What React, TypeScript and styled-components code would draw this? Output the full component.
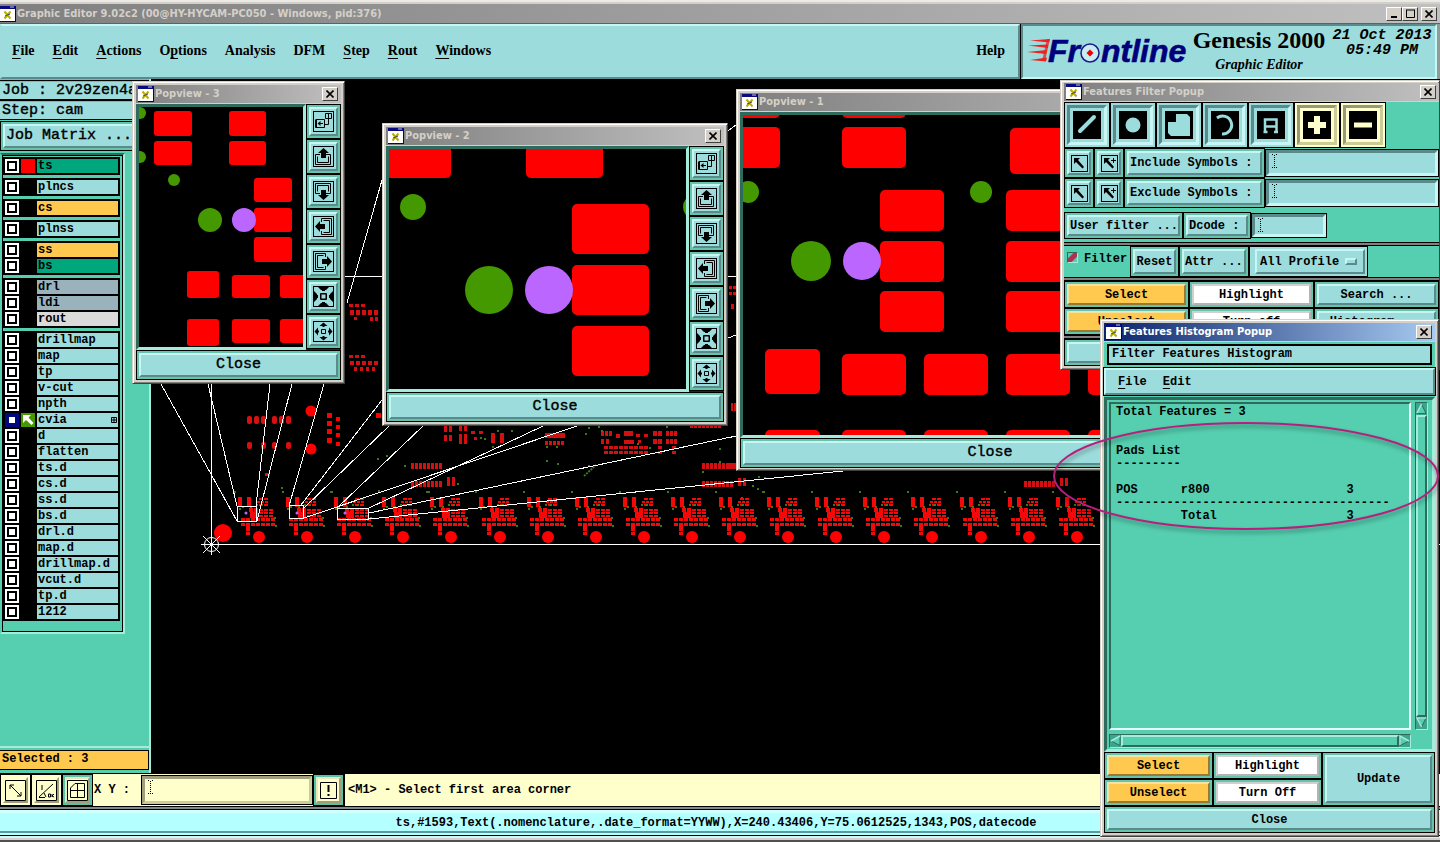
import React from 'react';
import styled, { createGlobalStyle, css } from 'styled-components';

const MONO = '"Liberation Mono", monospace';
const SERIF = '"Liberation Serif", serif';
const UI = '"DejaVu Sans Condensed", "DejaVu Sans", sans-serif';

const c = {
  green: '#55cfaf',
  aqua: '#9ddcdc',
  aquaHi: '#c8f6f4',
  aquaLo: '#5b8a8c',
  teal: '#2f6b5c',
  mint: '#a6ecdc',
  frame: '#d4d0c8',
  cream: '#ffffcc',
  orange: '#ffc84e',
  pad: '#ff0000',
  dot: '#449900',
  violet: '#bb66ff',
};

const tones = {
  aqua: { bg: c.aqua, hi: c.aquaHi, lo: c.aquaLo, ring: '#66c4ac' },
  tool: { bg: c.aqua, hi: c.aquaHi, lo: c.aquaLo, ring: c.aqua },
  cream: { bg: c.cream, hi: c.cream, lo: '#a09e7c', ring: c.cream },
  creamTool: { bg: c.cream, hi: '#cccc99', lo: '#99997a', ring: c.cream },
  creamGreen: { bg: c.cream, hi: '#e8e8bc', lo: '#a09e7c', ring: '#5cc0a4' },
  orange: { bg: c.orange, hi: '#f4e2a0', lo: '#9a7a30', ring: '#66c4ac' },
  white: { bg: '#ffffff', hi: '#d0d0d0', lo: '#b4b4b4', ring: '#66c4ac' },
};
type Tone = keyof typeof tones;

const GlobalStyle = createGlobalStyle`
  * { box-sizing: border-box; }
  body { margin: 0; background: #000; color: #000; overflow: hidden; }
  button, input, textarea, select { font: inherit; color: inherit; margin: 0; border-radius: 0; }
  u { text-decoration: underline; text-underline-offset: 3px; text-decoration-thickness: 1px; }
`;

const Page = styled.div`
  position: relative;
  display: flex;
  flex-direction: column;
  min-height: 100vh;
  overflow: hidden;
  font: bold 12px/14px ${MONO};
`;

/* ---------- shared controls ---------- */

const Key = styled.button<{ $tone?: Tone; $inset?: boolean; $w?: number; $grow?: boolean; $left?: boolean; $big?: boolean }>`
  ${({ $tone = 'aqua', $inset }) => {
    const t = tones[$tone];
    const a = $inset ? t.lo : t.hi;
    const b = $inset ? t.hi : t.lo;
    return css`
      background: ${t.bg};
      border: 2px solid;
      border-color: ${a} ${b} ${b} ${a};
      box-shadow: 0 0 0 2px ${t.ring}, 0 0 0 3px #000;
    `;
  }}
  display: flex;
  align-items: center;
  justify-content: ${p => (p.$left ? 'flex-start' : 'center')};
  margin: 3px;
  padding: 0 ${p => (p.$left ? '1px' : '0')};
  width: ${p => (p.$w ? `${p.$w}px` : 'auto')};
  flex: ${p => (p.$grow ? '1' : 'none')};
  white-space: pre;
  ${p => p.$big && css`font-size: 15px;`}
`;

const FieldBox = styled.label<{ $cream?: boolean; $w?: number }>`
  position: relative;
  display: flex;
  margin: 2px 1px;
  outline: 1px solid #000;
  border: 3px solid;
  border-color: ${p => (p.$cream ? '#a09e7c #cccc99 #cccc99 #a09e7c' : `${c.aquaLo} ${c.aquaHi} ${c.aquaHi} ${c.aquaLo}`)};
  background: ${p => (p.$cream ? c.cream : c.aqua)};
  width: ${p => (p.$w ? `${p.$w}px` : 'auto')};
  flex: ${p => (p.$w ? 'none' : '1')};
  min-width: 0;
`;

const FieldInput = styled.input`
  width: 100%;
  min-width: 0;
  border: 0;
  padding: 0 8px;
  background: transparent;
  outline: 0;
`;

const FieldCaret = styled.svg`
  position: absolute;
  left: 3px;
  top: 0;
`;

function Field({ label, cream, w, id }: { label: string; cream?: boolean; w?: number; id?: string }) {
  return (
    <FieldBox $cream={cream} $w={w}>
      <FieldInput id={id} aria-label={label} />
      <FieldCaret width="5" height="15" viewBox="0 0 5 15">
        <path d="M0 1h1v1h-1zM4 1h1v1h-1zM2 2h1v1h-1zM2 4h1v1h-1zM2 6h1v1h-1zM2 8h1v1h-1zM2 10h1v1h-1zM2 12h1v1h-1zM0 14h1v1h-1zM4 14h1v1h-1zM2 14h1v1h-1z" fill="#000" />
      </FieldCaret>
    </FieldBox>
  );
}

/* ---------- window chrome ---------- */

const TitleBar = styled.div<{ $active?: boolean; $main?: boolean }>`
  display: flex;
  align-items: center;
  gap: 1px;
  height: ${p => (p.$main ? '20px' : '19px')};
  padding: 0 3px 0 ${p => (p.$main ? '0' : '2px')};
  background: ${p => (p.$active ? 'linear-gradient(90deg, #0a246a, #a6caf0)' : 'linear-gradient(90deg, #808080, #c0c0c0)')};
  color: ${p => (p.$active ? '#fff' : '#d4d0c8')};
  border-bottom: 1px solid ${p => (p.$main ? '#4c6a6a' : c.frame)};
  font: bold 11px/18px ${UI};
`;

const TitleText = styled.span`
  flex: 1;
  white-space: nowrap;
  overflow: hidden;
`;

const TitleBtn = styled.button`
  width: 16px;
  height: 14px;
  padding: 0;
  display: flex;
  align-items: center;
  justify-content: center;
  background: ${c.frame};
  border: 1px solid;
  border-color: #fff #404040 #404040 #fff;
`;

const AppIcon = () => (
  <svg width="16" height="16" viewBox="0 0 16 16">
    <rect width="16" height="16" fill="#111" />
    <rect width="15" height="15" fill="#fff" />
    <rect width="15" height="3" fill="#0a0a80" />
    <path d="M10 1h4" stroke="#ccc" />
    <path d="M4.500 5.500l6 7M10.500 5.500l-6 7" stroke="#b8b000" strokeWidth="2" />
    <path d="M5 10l5-2" stroke="#446" strokeWidth="1" />
  </svg>
);

const CloseGlyph = () => (
  <svg width="8" height="8" viewBox="0 0 8 8">
    <path d="M0.500 0.500l7 7M7.500 0.500l-7 7" stroke="#000" strokeWidth="1.600" />
  </svg>
);

function Title({ text, active }: { text: string; active?: boolean }) {
  return (
    <TitleBar $active={active}>
      <AppIcon />
      <TitleText>{text}</TitleText>
      <TitleBtn aria-label={`Close ${text}`}><CloseGlyph /></TitleBtn>
    </TitleBar>
  );
}

const Win = styled.section<{ $w: number }>`
  position: absolute;
  width: ${p => p.$w}px;
  display: flex;
  flex-direction: column;
  border: 1px solid;
  border-color: ${c.frame} #404040 #404040 ${c.frame};
  box-shadow: inset 1px 1px 0 #fff, inset -1px -1px 0 #808080;
  padding: 3px;
  background: ${c.frame};
`;

const Pop3 = styled(Win)` left: 132px; top: 81px; `;
const Pop2 = styled(Win)` left: 382px; top: 123px; `;
const Pop1 = styled(Win)` left: 736px; top: 89px; padding-bottom: 2px; `;
const FilterWin = styled(Win)` right: 0; top: 80px; padding: 2px 0 3px 3px; `;
const HistWin = styled(Win)` right: 1px; top: 319px; `;

/* ---------- main title and header ---------- */

const MainTitle = styled.header`
  height: 24px;
  padding-top: 4px;
  background: ${c.frame};
  box-shadow: inset 0 2px 0 #eceae6;
`;

const BtnPair = styled.div`
  display: flex;
  margin-right: 2px;
`;

const HeaderRow = styled.div`
  display: flex;
  height: 55px;
  border-right: 3px solid #8f9a9a;
`;

const MenuPanel = styled.nav`
  flex: 1;
  display: flex;
  align-items: center;
  gap: 18px;
  padding: 0 13px 2px 10px;
  background: ${c.aqua};
  border: 2px solid;
  border-color: ${c.aquaHi} ${c.aquaLo} ${c.aquaLo} ${c.aqua};
`;

const MenuItem = styled.button<{ $end?: boolean }>`
  padding: 0;
  border: 0;
  background: none;
  font: bold 14px/18px ${SERIF};
  margin-left: ${p => (p.$end ? 'auto' : '0')};
`;

const Brand = styled.div`
  display: flex;
  width: 416px;
  margin-left: 1px;
  padding-left: 4px;
  background: ${c.aqua};
  border: 2px solid;
  border-color: ${c.aquaLo} ${c.aquaHi} ${c.aquaHi} ${c.aquaLo};
`;

const Product = styled.div`
  width: 140px;
  padding-top: 1px;
  text-align: center;
`;

const ProductName = styled.div`
  font: bold 24px/26px ${SERIF};
  white-space: nowrap;
`;

const ProductSub = styled.div`
  font: italic bold 14px/24px ${SERIF};
`;

const Clock = styled.time`
  flex: 1;
  padding-top: 2px;
  font: italic bold 15px/15px ${MONO};
  text-align: center;
  white-space: nowrap;
`;

const Logo = () => (
  <svg width="162" height="50" viewBox="0 0 162 50" aria-label="Frontline">
    <g fill="#ee2222">
      <path d="M3 14.500l20-1.500-1 3.500zM1 19.500l20-1v3.500zM0 26l20-2-1 4zM3 34l17-2.500-1 4z" />
      <path d="M20 13h3l-5 22h-3z" opacity=".75" />
    </g>
    <g fill="#00007c" stroke="#00007c" strokeWidth="0.6" fontFamily="Liberation Sans, sans-serif" fontWeight="bold" fontStyle="italic" fontSize="32">
      <text x="21" y="36">Fr</text>
      <text x="74" y="36">ntline</text>
    </g>
    <circle cx="63" cy="27" r="9" fill="#c8ecf0" stroke="#1a1a8c" strokeWidth="1.500" />
    <path d="M63 23.500l3.500 3.500-3.500 3.500-3.500-3.500z" fill="#e00" />
  </svg>
);

/* ---------- sidebar ---------- */

const Workspace = styled.main`
  flex: 1;
  display: flex;
  min-height: 0;
`;

const Sidebar = styled.aside`
  width: 151px;
  flex: none;
  display: flex;
  flex-direction: column;
  background: ${c.green};
  border-right: 2px solid ${c.mint};
  padding-top: 1px;
`;

const JobInfo = styled.div`
  height: 20px;
  padding: 1px 2px;
  background: ${c.aqua};
  border: 2px solid #000;
  border-width: 1px 0;
  box-shadow: inset 0 1px 0 ${c.green};
  font: 15px/18px ${MONO};
  -webkit-text-stroke: 0.4px #000;
  white-space: nowrap;
  overflow: hidden;
`;

const MatrixBar = styled.div`
  display: flex;
  margin: 1px 0 2px;
`;

const LayerPanel = styled.div`
  width: 125px;
  height: 481px;
  display: flex;
  flex-direction: column;
  gap: 3px;
  padding: 2px 2px 0 1px;
  border: 2px solid;
  border-color: ${c.teal} ${c.mint} ${c.mint} ${c.green};
  outline-offset: -3px;
  outline: 1px solid #000;
`;

const LayerGroup = styled.ul`
  list-style: none;
  margin: 0;
  padding: 1px;
  width: 117px;
  background: #000;
`;

const LayerRow = styled.li`
  display: flex;
  height: 16px;
  padding: 1px;
  gap: 2px;
`;

const Tick = styled.input<{ $on?: boolean }>`
  appearance: none;
  width: 14px;
  height: 14px;
  border: 2px solid ${p => (p.$on ? '#000a80' : '#fff')};
  background: #fff;
  box-shadow: inset 0 0 0 2px ${p => (p.$on ? '#000a80' : '#000')};
`;

const Swatch = styled.span<{ $color?: string }>`
  width: 14px;
  height: 14px;
  background: ${p => p.$color || '#000'};
`;

const LayerName = styled.label<{ $bg: string }>`
  flex: 1;
  display: flex;
  align-items: center;
  justify-content: space-between;
  padding: 0 1px;
  background: ${p => p.$bg};
  line-height: 14px;
`;

const Spacer = styled.div` flex: 1; `;

const Selected = styled.div`
  height: 20px;
  margin: 2px 0 3px;
  padding: 0 2px;
  border: 1px solid #000;
  border-left: 0;
  background: ${c.orange};
  line-height: 17px;
`;

const SelectedWrap = styled.div`
  border-top: 2px solid ${c.mint};
`;

type Layer = { n: string; bg?: string; sw?: string; on?: boolean };
const TEAL = '#00a67c';
const GREY = '#99b2bc';
const layerGroups: Layer[][] = [
  [{ n: 'ts', bg: TEAL, sw: c.pad }],
  [{ n: 'plncs' }],
  [{ n: 'cs', bg: c.orange }],
  [{ n: 'plnss' }],
  [{ n: 'ss', bg: c.orange }, { n: 'bs', bg: TEAL }],
  [{ n: 'drl', bg: GREY }, { n: 'ldi', bg: GREY }, { n: 'rout', bg: '#dadada' }],
  [
    ...['drillmap', 'map', 'tp', 'v-cut', 'npth'].map(n => ({ n })),
    { n: 'cvia', on: true, sw: c.dot },
    ...['d', 'flatten', 'ts.d', 'cs.d', 'ss.d', 'bs.d', 'drl.d', 'map.d', 'drillmap.d', 'vcut.d', 'tp.d', '1212'].map(n => ({ n })),
  ],
];

function Layers() {
  return (
    <LayerPanel>
      {layerGroups.map((g, i) => (
        <LayerGroup key={i}>
          {g.map(l => (
            <LayerRow key={l.n}>
              <Tick type="checkbox" id={`layer-${l.n}`} $on={l.on} defaultChecked={l.on} />
              <Swatch $color={l.sw}>
                {l.on && (
                  <svg width="14" height="14" viewBox="0 0 14 14" display="block">
                    <path d="M2 2h8L7.500 4.500l5 5.500-2 2-5.500-5L2 10z" fill="#fff" />
                  </svg>
                )}
              </Swatch>
              <LayerName htmlFor={`layer-${l.n}`} $bg={l.bg || c.aqua}>
                {l.n}
                {l.on && (
                  <svg width="6" height="6" viewBox="0 0 6 6">
                    <path d="M0.500 0.500h5v5h-5zM3 0v6M0 3h6" stroke="#000" fill="none" />
                  </svg>
                )}
              </LayerName>
            </LayerRow>
          ))}
        </LayerGroup>
      ))}
    </LayerPanel>
  );
}

/* ---------- board canvas ---------- */

const Canvas = styled.div`
  flex: 1;
  display: grid;
  min-width: 0;
  background: #000;
`;

const BoardSvg = styled.svg`
  width: 100%;
  height: 100%;
  min-height: 0;
`;

const row = (x: number, y: number, n: number, pitch: number, w: number, h: number) =>
  Array.from({ length: n }, (_, i) => `M${x + i * pitch} ${y}h${w}v${h}h${-w}z`).join('');

const unitRed =
  'M-21-40h4v10h-4zM-12-40h4v10h-4z' +
  row(0, -39, 2, 5, 4, 2) + row(-2, -36, 3, 4, 3, 2) + row(0, -33, 2, 5, 4, 2) +
  'M-10-29h4v4h-4zM-9-25h4v6h-4zM-5-29h4v10h-4z' +
  row(0, -28, 3, 5, 4, 2) + row(0, -25, 3, 5, 4, 2) + row(0, -22, 3, 5, 4, 2) +
  row(-18, -19, 7, 5, 4, 3) + row(-18, -14, 7, 5, 4, 3) +
  'M-13-11h4v5h-4zM-13-5h4v3h-4z';
const unitGreen = row(-25, -46, 1, 1, 2, 2) + row(-20, -29, 1, 1, 2, 2) + row(15, -20, 1, 1, 2, 2) + row(16, -12, 1, 1, 2, 2) + row(-3, -33, 2, 5, 2, 2) + row(-17, -31, 2, 8, 2, 2);

const clusters =
  row(411, 463, 8, 4, 3, 6) + row(411, 481, 8, 4, 3, 6) + row(447, 477, 2, 5, 3, 9) +
  row(702, 463, 8, 4, 3, 6) + row(702, 481, 8, 4, 3, 6) + row(738, 478, 2, 5, 3, 8) +
  row(1024, 481, 8, 4, 3, 6) + row(1060, 478, 2, 5, 3, 8) +
  row(444, 425, 2, 5, 3, 7) + row(459, 425, 2, 5, 3, 6) + row(444, 435, 2, 5, 3, 6) + row(459, 434, 2, 5, 3, 10) +
  row(471, 431, 2, 8, 4, 3) + row(474, 437, 1, 8, 3, 3) +
  row(491, 433, 2, 9, 4, 10) +
  row(545, 433, 5, 4, 4, 5) + row(545, 441, 5, 4, 3, 4) +
  row(601, 431, 3, 4, 3, 5) + row(601, 439, 2, 5, 3, 5) + row(616, 434, 2, 1, 3, 4) + row(624, 431, 3, 3, 3, 5) + row(624, 440, 2, 5, 5, 4) +
  row(636, 434, 2, 8, 4, 3) + row(638, 440, 1, 8, 3, 3) +
  row(653, 431, 2, 5, 4, 5) + row(666, 431, 3, 4, 3, 5) + row(653, 439, 2, 5, 4, 5) + row(666, 439, 3, 4, 3, 5) +
  row(604, 446, 9, 5, 4, 3) + row(604, 451, 9, 5, 4, 3) + row(658, 446, 2, 14, 4, 3) + row(658, 451, 2, 14, 4, 3) +
  row(690, 425, 8, 4, 3, 3) +
  row(349, 304, 3, 6, 4, 3) + row(350, 310, 5, 6, 4, 5) + row(354, 317, 1, 8, 3, 3) + row(370, 317, 2, 5, 3, 4) +
  row(349, 355, 3, 6, 4, 3) + row(350, 361, 5, 6, 4, 4) + row(354, 367, 4, 6, 3, 4) +
  row(729, 286, 2, 4, 3, 3) + row(729, 292, 2, 4, 3, 3) + row(731, 304, 1, 4, 3, 5) + row(731, 403, 2, 3, 2, 8) + row(729, 463, 2, 4, 3, 6);

const strays = [[377, 458], [386, 455], [404, 465], [497, 430], [492, 446], [511, 430], [546, 446], [556, 446], [546, 460], [557, 463], [585, 433], [588, 427], [598, 426], [601, 430], [588, 465], [666, 426], [719, 448], [719, 461], [702, 471], [649, 447], [637, 443], [281, 487], [331, 491], [222, 494], [457, 483], [428, 491], [758, 476], [764, 477], [752, 485], [757, 488], [762, 491], [741, 497], [334, 500], [378, 490], [480, 437], [484, 438]];

const Board = () => {
  const units = Array.from({ length: 18 }, (_, i) => 259 + Math.round(i * 48.1));
  return (
    <BoardSvg aria-hidden>
      <defs>
        <g id="unit">
          <path d={unitRed} fill="#f50808" />
          <path d={unitGreen} fill="#3a7a10" />
          <circle r="6" fill={c.pad} />
        </g>
      </defs>
      <g transform="translate(-151 -79)">
        <g fill={c.pad}>
          <circle cx="223" cy="533" r="9" />
          {[249, 256, 263, 274, 281, 288].map(x => <rect key={x} x={x - 2} y="416" width="5" height="8" rx="2" fill="#d81010" />)}
          {[249, 263, 274, 288].map(x => <rect key={x} x={x - 2} y="442" width="5" height="7" rx="2" fill="#d81010" />)}
          <circle cx="311" cy="411" r="5.500" />
          <circle cx="311" cy="449" r="5.500" />
          {[415, 423, 431, 440].map(y => <path key={y} d={`M327 ${y - 2}h5v5h-5zM336 ${y + 2}h4v4h-4z`} />)}
          <path d="M376 413h5v5h-5zM265 473h5v3h-5z" />
        </g>
        <path d={clusters} fill="#d40f0f" />
        <path d="M584 476l12-11" stroke="#3a7a10" strokeWidth="2" strokeDasharray="2 1" />
        {strays.map(([x, y]) => <rect key={`${x}-${y}`} x={x} y={y} width="2" height="2" fill="#3a7a10" />)}
        {units.map(x => <use key={x} href="#unit" x={x} y="537" />)}
        <g fill="#b6f">
          <circle cx="246" cy="513" r="1.500" /><circle cx="297" cy="513" r="1.500" /><circle cx="345" cy="513" r="1.500" />
        </g>
        <g stroke="#fff" fill="none" shapeRendering="crispEdges">
          <path d="M211.500 544V276.500H1440M211 544.500H1440" />
          <path d="M237.500 506.500h19v15h-19zM289.500 505.500h14v13h-14zM337.500 508.500h31v11h-31z" />
          <path d="M161 384L237 521M208 384L237 506M270 384L256 506M292 384L257 521M324 384L289 506" />
          <path d="M347 303L382 180M382 400L301 505M389 426L304 508M423 426L337 508" />
          <path d="M304 518L577 426M369 508L543 426M369 513L736 436M369 519L843 471" />
          <path d="M728 131l8-6M728 338l8-3M728 438l8-2" />
        </g>
        <g stroke="#fff" fill="none">
          <circle cx="211.500" cy="544.500" r="7" />
          <path d="M201 544.500h21M211.500 534v21M203 536l17 17M220 536l-17 17" />
        </g>
      </g>
    </BoardSvg>
  );
};

/* ---------- popviews ---------- */

const PopBody = styled.div` display: flex; background: #0a3328; `;

const ViewFrame = styled.div<{ $h: number }>`
  flex: 1;
  min-width: 0;
  height: ${p => p.$h}px;
  display: flex;
  border: 3px solid;
  border-color: ${c.teal} ${c.mint} ${c.mint} ${c.teal};
  background: #000;
`;

const ViewSvg = styled.svg` display: block; flex: 1; width: 100%; height: 100%; `;

const PadButtons = styled.div` display: flex; flex-direction: column; width: 35px; `;

const NavKey = styled(Key)` width: 29px; height: 29px; padding: 0; `;

const CloseRow = styled.div` display: flex; `;
const CloseKey = styled(Key)` flex: 1; height: 24px; font-weight: normal; -webkit-text-stroke: 0.4px #000; `;

const navIcons: [string, string, string][] = [
  ['Zoom area', 'M3 8.500h8.500v8H2.500v-8M3.500 9v7M12.500 2.500h6v5h-6zM15.500 2v6M11 13.500h4.500V8', 'M4.500 12.500l3-2.500v2h2.500v1H7.500v2z'],
  ['Pan up', 'M7 8.500H2.500v10h15v-10H13M4.500 10.500v6h11v-6', 'M10.500 2l5.500 5h-3v5H8V7H5z'],
  ['Pan down', 'M7 12.500H2.500v-10h15v10H13M4.500 10.500v-6h11v6', 'M10.500 19l5.500-5h-3V9H8v5H5z'],
  ['Pan left', 'M8.500 6V2.500h10v16h-10V15M10.500 4.500h6v12h-6', 'M2 10.500l5-5.500v3h5v5H7v3z'],
  ['Pan right', 'M12.500 6V2.500h-10v16h10V15M10.500 4.500h-6v12h6', 'M19 10.500l-5-5.500v3H9v5h5v3z'],
  ['Zoom in', 'M8 8h5v5H8zM7.500 7.500h6v6h-6z', 'M5 1h11l-3 3h-1v1H9V4H8zM5 20h11l-3-3h-1v-1H9v1H8zM1 5v11l3-3v-1h1V9H4V8zM20 5v11l-3-3v-1h-1V9h1V8z'],
  ['Zoom out', 'M8.500 8.500h4v4h-4z', 'M10.500 1.500l4 3.500h-3v1h-2V5h-3zM10.500 19.500l4-3.500h-3v-1h-2v1h-3zM1.500 10.500L5 6.500v3h1v2H5v3zM19.500 10.500L16 6.500v3h-1v2h1v3z'],
];

const NavColumn = () => (
  <PadButtons>
    {navIcons.map(([name, line, fill]) => (
      <NavKey key={name} aria-label={name}>
        <svg width="21" height="21" viewBox="0 0 21 21">
          <rect x=".5" y=".5" width="20" height="20" fill="none" stroke="#000" />
          <path d={line} fill="none" stroke="#000" />
          <path d={fill} fill="#000" />
        </svg>
      </NavKey>
    ))}
  </PadButtons>
);

type View = { title: string; x: number; y: number; h: number; pads: number[][]; dots: number[][]; sel: number[]; r: number };

const views: Record<string, View> = {
  v3: {
    title: 'Popview - 3', x: 139, y: 107, h: 246, r: 3,
    pads: [[154, 111, 38, 25], [229, 111, 37, 25], [154, 141, 38, 24], [229, 141, 37, 24], [254, 178, 38, 24], [254, 208, 38, 24], [254, 237, 38, 25], [187, 271, 32, 27], [232, 275, 38, 23], [280, 275, 38, 23], [187, 319, 32, 27], [232, 319, 38, 24], [280, 319, 38, 24]],
    dots: [[140, 113, 6], [140, 157, 6], [174, 180, 6], [210, 220, 12]], sel: [244, 220, 12],
  },
  v2: {
    title: 'Popview - 2', x: 389, y: 149, h: 246, r: 5,
    pads: [[374, 142, 77, 36], [526, 142, 77, 36], [572, 204, 77, 50], [572, 265, 77, 50], [572, 326, 77, 50]],
    dots: [[413, 207, 13], [696, 207, 13], [489, 290, 24]], sel: [549, 290, 24],
  },
  v1: {
    title: 'Popview - 1', x: 743, y: 115, h: 326, r: 5,
    pads: [[716, 77, 64, 41], [842, 77, 64, 41], [716, 127, 64, 41], [842, 127, 64, 41], [1010, 128, 64, 46], [880, 190, 64, 41], [880, 241, 64, 41], [880, 291, 64, 41], [1006, 190, 64, 41], [1006, 241, 64, 41], [1006, 291, 64, 41], [765, 349, 55, 45], [842, 354, 64, 41], [924, 354, 64, 41], [1006, 354, 64, 41], [1088, 354, 64, 41], [765, 430, 55, 41], [842, 430, 64, 41], [924, 430, 64, 41], [1006, 430, 64, 41], [1088, 430, 64, 41]],
    dots: [[748, 192, 11], [981, 192, 11], [811, 261, 20]], sel: [862, 261, 19],
  },
};

function PopContent({ v }: { v: View }) {
  return (
    <>
      <Title text={v.title} />
      <PopBody>
        <ViewFrame $h={v.h}>
          <ViewSvg aria-label={`${v.title} board view`}>
            <g transform={`translate(${-v.x} ${-v.y})`}>
              {v.pads.map(([x, y, w, h], i) => <rect key={i} x={x} y={y} width={w} height={h} rx={v.r} fill={c.pad} />)}
              {v.dots.map(([x, y, r], i) => <circle key={i} cx={x} cy={y} r={r} fill={c.dot} />)}
              <circle cx={v.sel[0]} cy={v.sel[1]} r={v.sel[2]} fill={c.violet} />
            </g>
          </ViewSvg>
        </ViewFrame>
        <NavColumn />
      </PopBody>
      <CloseRow><CloseKey $big>Close</CloseKey></CloseRow>
    </>
  );
}

/* ---------- features filter popup ---------- */

const GreenBody = styled.div`
  display: flex;
  flex-direction: column;
  background: ${c.green};
`;

const Line = styled.div<{ $h: number; $top?: number }>`
  display: flex;
  height: ${p => p.$h}px;
  padding-top: ${p => p.$top || 0}px;
`;

const Rule = styled.hr`
  width: 100%;
  height: 4px;
  margin: 0;
  border: solid #000;
  border-width: 1px 0;
  background: #808080;
`;

const ToolKey = styled(Key)` width: 40px; height: 40px; border-width: 3px; padding: 0; `;

const CheckLabel = styled.label`
  display: flex;
  align-items: flex-start;
  gap: 6px;
  width: 66px;
  padding: 6px 0 0 3px;
`;

const RedCheck = styled.input`
  appearance: none;
  width: 11px;
  height: 11px;
  border: 1px solid;
  border-color: ${c.teal} ${c.mint} ${c.mint} ${c.teal};
  background: linear-gradient(135deg, ${c.green} 25%, #b03050 35%, #b03050 65%, ${c.green} 75%);
`;

const OptionCell = styled.div`
  display: flex;
  background: ${c.aqua};
  border: 1px solid #000;
  padding: 2px 2px 2px 5px;
`;

const OptionBox = styled.span`
  position: relative;
  display: flex;
  align-items: center;
  width: 110px;
  border: 2px solid;
  border-color: ${c.aquaHi} ${c.aquaLo} ${c.aquaLo} ${c.aquaHi};
`;

const OptionSelect = styled.select`
  appearance: none;
  width: 100%;
  border: 0;
  padding: 0 3px;
  background: transparent;
`;

const OptionTab = styled.span`
  position: absolute;
  right: 6px;
  width: 12px;
  height: 7px;
  border: 2px solid;
  border-color: ${c.aquaHi} ${c.aquaLo} ${c.aquaLo} ${c.aquaHi};
  pointer-events: none;
`;

const toolIcons: [string, Tone, React.ReactNode][] = [
  ['Lines', 'tool', <path d="M7 20L21 6" strokeWidth="4" strokeLinecap="round" />],
  ['Pads', 'tool', <circle cx="14" cy="14" r="7.500" fill="currentColor" stroke="none" />],
  ['Surfaces', 'tool', <path d="M11 3h11l3 3v19H6l-3-3V11h8z" fill="currentColor" stroke="none" />],
  ['Arcs', 'tool', <path d="M6 7a9 9 0 1 1 5 16" strokeWidth="3" />],
  ['Text', 'tool', <path d="M8 22V8.500h11.500V22M8 15.500h11.500M6.500 21h4M17 21h4" strokeWidth="2.500" />],
  ['Positive', 'creamTool', <path d="M14 5v18M5 14h18" strokeWidth="6" />],
  ['Negative', 'creamTool', <path d="M5 14h18" strokeWidth="5" />],
];

const Arrow = ({ plus }: { plus?: boolean }) => (
  <svg width="17" height="17" viewBox="0 0 17 17">
    <rect x=".5" y=".5" width="16" height="16" fill="none" stroke="#000" />
    <path d="M3 3h6L7 5l6 7-1.500 1.500L5 7 3 9z" fill="#000" />
    {plus && <path d="M12.500 3v5M10 5.500h5" stroke="#000" />}
  </svg>
);

function SymbolRow({ label }: { label: string }) {
  return (
    <Line $h={30}>
      <Key $w={24} aria-label={`Pick ${label}`}><Arrow /></Key>
      <Key $w={24} aria-label={`Add ${label}`}><Arrow plus /></Key>
      <Key $w={135} $left>{label}</Key>
      <Field label={label} />
    </Line>
  );
}

const FilterPopup = () => (
  <FilterWin $w={380}>
    <Title text="Features Filter Popup" />
    <GreenBody>
      <Line $h={46}>
        {toolIcons.map(([name, tone, g]) => (
          <ToolKey key={name} $tone={tone} $inset aria-label={name}>
            <svg width="28" height="28" viewBox="0 0 28 28" color={tones[tone].bg}>
              <rect width="28" height="28" fill="#000" />
              <g fill="none" stroke="currentColor">{g}</g>
            </svg>
          </ToolKey>
        ))}
      </Line>
      <SymbolRow label="Include Symbols :" />
      <SymbolRow label="Exclude Symbols :" />
      <Line $h={34} $top={4}>
        <Line $h={27}>
          <Key $w={113} $left>User filter ...</Key>
          <Key $w={62} $left>Dcode :</Key>
          <Field label="Dcode" w={74} />
        </Line>
      </Line>
      <Rule />
      <Line $h={31}>
        <CheckLabel><RedCheck type="checkbox" defaultChecked />Filter</CheckLabel>
        <Key $w={43}>Reset</Key>
        <Key $w={64} $left>Attr ...</Key>
        <OptionCell>
          <OptionBox>
            <OptionSelect aria-label="Profile"><option>All Profile</option></OptionSelect>
            <OptionTab />
          </OptionBox>
        </OptionCell>
      </Line>
      <Rule />
      <Line $h={27}>
        <Key $w={119} $tone="orange">Select</Key>
        <Key $w={119} $tone="white">Highlight</Key>
        <Key $grow>Search ...</Key>
      </Line>
      <Line $h={27}>
        <Key $w={119} $tone="orange">Unselect</Key>
        <Key $w={119} $tone="white">Turn off</Key>
        <Key $grow>Histogram ...</Key>
      </Line>
      <Rule />
      <Line $h={27}><Key $grow aria-label="Close filter" /></Line>
    </GreenBody>
  </FilterWin>
);

/* ---------- histogram popup ---------- */

const HistHeading = styled.div`
  margin: 2px 3px 3px;
  padding: 1px 3px 2px;
  border: 2px solid #000;
  background: ${c.aqua};
`;

const HistMenu = styled.nav`
  display: flex;
  gap: 16px;
  height: 27px;
  padding: 0 12px;
  margin-bottom: 2px;
  align-items: center;
  outline: 1px solid #000;
  border: 2px solid;
  border-color: ${c.aquaHi} ${c.aquaLo} ${c.aquaLo} ${c.aquaHi};
  background: ${c.aqua};
`;

const HistMenuItem = styled.button` padding: 0; border: 0; background: none; `;

const ListFrame = styled.div`
  display: grid;
  grid-template-columns: 1fr 13px;
  grid-template-rows: 328px 14px;
  gap: 4px;
  height: 355px;
  padding: 2px 4px 1px 2px;
  border: 3px solid;
  border-color: ${c.teal} ${c.mint} ${c.mint} ${c.teal};
  background: ${c.green};
`;

const ListText = styled.textarea`
  resize: none;
  border: 2px solid;
  border-color: ${c.teal} #e8fff8 #e8fff8 ${c.teal};
  padding: 2px 5px;
  background: ${c.green};
  line-height: 13px;
  white-space: pre;
  overflow: hidden;
  outline: 0;
`;

const Bar = styled.div<{ $horizontal?: boolean }>`
  display: flex;
  flex-direction: ${p => (p.$horizontal ? 'row' : 'column')};
  background: #3da58b;
  border: 1px solid;
  border-color: ${c.teal} ${c.mint} ${c.mint} ${c.teal};
`;

const Thumb = styled.div`
  flex: 1;
  background: ${c.green};
  border: 2px solid;
  border-color: ${c.mint} ${c.teal} ${c.teal} ${c.mint};
`;

const arrows: Record<string, [string, string]> = {
  up: ['M5.500 1L1 10', 'M1 10.500h9L5.500 1'],
  down: ['M10 1H1l4.500 9', 'M5.500 10L10 1H1z'],
  left: ['M10 1L1 6', 'M1 6l9 4.500V1'],
  right: ['M1 10V1l9 5', 'M10 6L1 10.500V1z'],
};

const BarArrow = ({ dir }: { dir: string }) => (
  <svg width="11" height="12" viewBox="0 0 11 12">
    <path d={arrows[dir][1]} stroke={c.teal} fill={c.green} strokeWidth="1" />
    <path d={arrows[dir][0]} stroke={c.mint} fill="none" strokeWidth="1.500" />
  </svg>
);

const HistButtons = styled.div`
  display: grid;
  grid-template-columns: 109px 109px 1fr;
  grid-template-rows: 27px 27px 27px;
`;

const TallKey = styled(Key)` grid-row: 1 / 3; grid-column: 3; `;
const WideKey = styled(Key)` grid-column: 1 / 4; `;

const report = [
  'Total Features = 3', '', '', 'Pads List', '---------', '',
  'POS      r800                   3', '-'.repeat(38),
  '         Total                  3',
].join('\n');

const HistogramPopup = () => (
  <HistWin $w={339}>
    <Title text="Features Histogram Popup" active />
    <GreenBody>
      <HistHeading>Filter Features Histogram</HistHeading>
      <HistMenu>
        <HistMenuItem><u>F</u>ile</HistMenuItem>
        <HistMenuItem><u>E</u>dit</HistMenuItem>
      </HistMenu>
      <ListFrame>
        <ListText readOnly aria-label="Histogram report" defaultValue={report} />
        <Bar><BarArrow dir="up" /><Thumb /><BarArrow dir="down" /></Bar>
        <Bar $horizontal><BarArrow dir="left" /><Thumb /><BarArrow dir="right" /></Bar>
      </ListFrame>
      <HistButtons>
        <Key $tone="orange">Select</Key>
        <Key $tone="white">Highlight</Key>
        <TallKey>Update</TallKey>
        <Key $tone="orange">Unselect</Key>
        <Key $tone="white">Turn Off</Key>
        <WideKey>Close</WideKey>
      </HistButtons>
    </GreenBody>
  </HistWin>
);

const Callout = styled.svg`
  position: absolute;
  right: 0;
  top: 420px;
  pointer-events: none;
  filter: drop-shadow(1px 3px 2px rgba(0, 0, 0, 0.4));
`;

/* ---------- status rows ---------- */

const StatusRow = styled.div`
  display: flex;
  height: 33px;
  background: ${c.cream};
  border-top: 1px solid #000;
`;

const StatusKey = styled(Key)` width: 25px; margin: 3px; padding: 0; `;

const XyLabel = styled.label`
  display: flex;
  align-items: center;
  width: 48px;
  padding-left: 1px;
`;

const Prompt = styled.div`
  flex: 1;
  display: flex;
  align-items: center;
  padding-left: 3px;
  border-left: 1px solid #000;
`;

const StatusSep = styled.div`
  height: 3px;
  background: #808c8c;
  border-top: 1px solid #000;
`;

const MessageBar = styled.div`
  height: 27px;
  display: flex;
  align-items: center;
  justify-content: center;
  padding-right: 8px;
  background: #b4ffff;
  border: 1px solid #000;
  border-width: 1px 0;
  box-shadow: inset 0 3px 0 #d0ffff, inset 0 -2px 0 #b4ffff, inset 0 -4px 0 #5b9a9c;
`;

const BottomEdge = styled.div`
  height: 6px;
  background: ${c.frame};
  border-top: 2px solid #c8fafa;
  border-bottom: 2px solid #505050;
`;

const G = ({ d }: { d: string }) => (
  <svg width="21" height="21" viewBox="0 0 21 21">
    <path d={`M.500 .500h20v20H.500z${d}`} fill="none" stroke="#000" />
  </svg>
);

const menu: [string, string, string][] = [
  ['', 'F', 'ile'], ['', 'E', 'dit'], ['', 'A', 'ctions'], ['O', 'p', 'tions'], ['Analysis', '', ''], ['DFM', '', ''],
  ['', 'S', 'tep'], ['', 'R', 'out'], ['', 'W', 'indows'],
];

export default function App() {
  return (
    <Page>
      <GlobalStyle />
      <MainTitle>
        <TitleBar $main>
          <AppIcon />
          <TitleText>Graphic Editor 9.02c2 (00@HY-HYCAM-PC050 - Windows, pid:376)</TitleText>
          <BtnPair>
            <TitleBtn aria-label="Minimize"><svg width="8" height="8"><path d="M1 7h6" stroke="#000" strokeWidth="2" /></svg></TitleBtn>
            <TitleBtn aria-label="Maximize"><svg width="9" height="9"><path d="M.5 1v7.500h8V1M0 1h9" stroke="#000" fill="none" /></svg></TitleBtn>
          </BtnPair>
          <TitleBtn aria-label="Close"><CloseGlyph /></TitleBtn>
        </TitleBar>
      </MainTitle>
      <HeaderRow>
        <MenuPanel>
          {menu.map(([a, u, b]) => <MenuItem key={a + u + b}>{a}{u && <u>{u}</u>}{b}</MenuItem>)}
          <MenuItem $end>Help</MenuItem>
        </MenuPanel>
        <Brand>
          <Logo />
          <Product>
            <ProductName>Genesis 2000</ProductName>
            <ProductSub>Graphic Editor</ProductSub>
          </Product>
          <Clock>21 Oct 2013<br />05:49 PM</Clock>
        </Brand>
      </HeaderRow>
      <Workspace>
        <Sidebar>
          <JobInfo>Job : 2v29zen4a</JobInfo>
          <JobInfo>Step: cam</JobInfo>
          <MatrixBar><CloseKey $big $left>Job Matrix ...</CloseKey></MatrixBar>
          <Layers />
          <Spacer />
          <SelectedWrap><Selected>Selected : 3</Selected></SelectedWrap>
        </Sidebar>
        <Canvas><Board /></Canvas>
      </Workspace>
      <StatusRow>
        <StatusKey $tone="cream" aria-label="Measure"><G d="M5 5l11 11M5 9V5h4M16 12v4h-4" /></StatusKey>
        <StatusKey $tone="cream" aria-label="Angle snap"><G d="M3 17L17 4M3 17.500h6M6 5v5M8 13l2 4M12.500 14v3h2v-3zM16 14v3M18 14l-2 2 2 1" /></StatusKey>
        <StatusKey $tone="creamGreen" aria-label="Grid"><G d="M3.500 17.500V8L8 3.500h9.500v14zM10.500 3v15M3 10.500h15" /></StatusKey>
        <XyLabel htmlFor="xy">X Y :</XyLabel>
        <Field id="xy" label="X Y" cream w={170} />
        <StatusKey $tone="creamGreen" aria-label="Alert">
          <svg width="17" height="17" viewBox="0 0 17 17">
            <path d="M.5 .5h16v16H.5z" fill="none" stroke="#000" />
            <path d="M8.500 3v7M8.500 12v2" stroke="#000" strokeWidth="2" />
          </svg>
        </StatusKey>
        <Prompt>&lt;M1&gt; - Select first area corner</Prompt>
      </StatusRow>
      <StatusSep />
      <MessageBar>ts,#1593,Text(.nomenclature,.date_format=YYWW),X=240.43406,Y=75.0612525,1343,POS,datecode</MessageBar>
      <BottomEdge />

      <Pop3 $w={213}><PopContent v={views.v3} /></Pop3>
      <Pop2 $w={346}><PopContent v={views.v2} /></Pop2>
      <Pop1 $w={508}><PopContent v={views.v1} /></Pop1>
      <FilterPopup />
      <HistogramPopup />
      <Callout width="390" height="116" viewBox="0 0 390 116" aria-hidden>
        <ellipse cx="196" cy="56" rx="192" ry="53" fill="none" stroke="#b5207c" strokeWidth="2" />
      </Callout>
    </Page>
  );
}
